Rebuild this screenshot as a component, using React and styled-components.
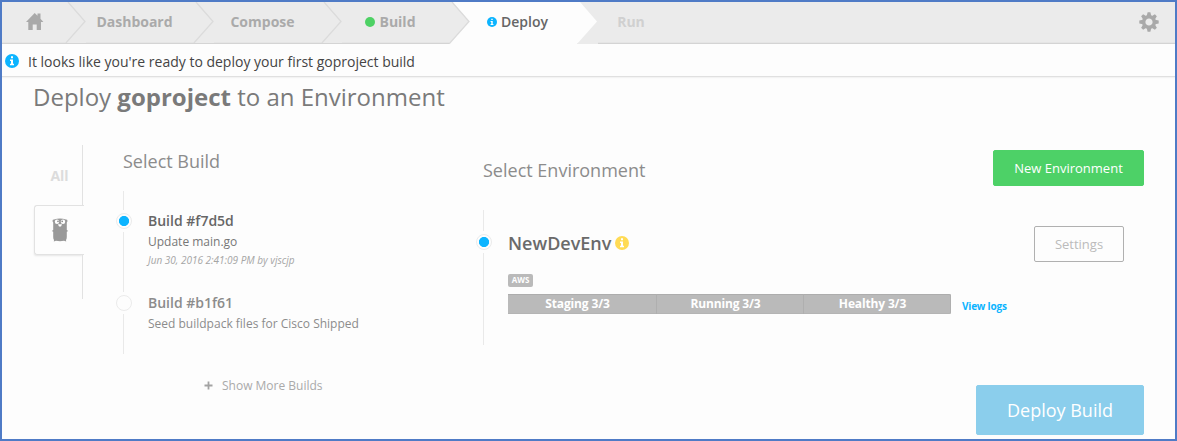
import React from "react";
import styled, { createGlobalStyle, css } from "styled-components";

const GlobalStyle = createGlobalStyle`
  * { box-sizing: border-box; }
  body { margin: 0; background: #fdfdfd; }
`;

const Frame = styled.div`
  width: 1177px;
  height: 441px;
  border: 2px solid #4f7bc6;
  background: #fdfdfd;
  overflow: hidden;
  font-family: "Open Sans", "Liberation Sans", sans-serif;
  color: #666;
  white-space: nowrap;
`;

const NavBar = styled.nav`
  display: flex;
  height: 42px;
  background: #ebebeb;
  box-shadow: inset 0 -1px 0 #d4d4d4, inset 0 -2px 0 #e5e5e5;
`;

const HomeLink = styled.a`
  width: 63px;
  padding: 11px 0 0 24px;
`;

const Step = styled.a`
  display: flex;
  width: ${(p) => p.$width || 128}px;
`;

const StepLabel = styled.span`
  flex: 1;
  display: flex;
  align-items: center;
  justify-content: center;
  gap: 4px;
  padding: 0 ${(p) => (p.$active ? 12 : 10)}px 3px 0;
  font-size: 14px;
  font-weight: ${(p) => (p.$active ? 600 : 700)};
  color: ${(p) => p.$color || "#aaa"};
  background: ${(p) => (p.$active ? "#fdfdfd" : "transparent")};
`;

const StatusDot = styled.i`
  width: 10px;
  height: 10px;
  border-radius: 50%;
  background: #4dd164;
`;

const SettingsLink = styled.a`
  margin-left: auto;
  padding: 10px 16px 0 0;
`;

const Notice = styled.div`
  display: flex;
  align-items: center;
  height: 33px;
  padding: 4px 0 0 3px;
  gap: 9px;
  border-bottom: 1px solid #e0e0e0;
  box-shadow: 0 1px 1px #f3f3f3;
  font-size: 14px;
  line-height: 20px;
  color: #444;
  background: #fdfdfd;

  svg {
    margin-bottom: 3px;
  }
`;

const PageTitle = styled.h1`
  margin: 0;
  padding-left: 31px;
  height: 42px;
  line-height: 40px;
  font-size: 24px;
  font-weight: 400;
  color: #7a7a7a;
`;

const Body = styled.main`
  display: flex;
  padding-left: 32px;
`;

const Tabs = styled.aside`
  width: 50px;
  height: 154px;
  margin-top: 26px;
`;

const Tab = styled.div`
  display: flex;
  align-items: center;
  justify-content: center;
  font-size: 14px;
  font-weight: 700;
  color: #dcdcdc;
  height: ${(p) => p.$height}px;
  ${(p) =>
    p.$selected
      ? css`
          width: 50px;
          border: 1px solid #e2e2e2;
          border-right: 0;
          border-radius: 3px 0 0 3px;
          box-shadow: -1px 2px 2px -1px #e6e6e6;
        `
      : css`
          width: 49px;
          padding-left: 3px;
          border-right: 1px solid #e2e2e2;
        `}
`;

const Builds = styled.section`
  width: 392px;
  padding: 31px 0 0 32px;
`;

const SectionTitle = styled.h2`
  margin: 0;
  padding-left: 7px;
  font-size: 18px;
  line-height: 22px;
  font-weight: 400;
  color: #8c8c8c;
`;

const BuildList = styled.div`
  margin-top: 19px;
`;

const TimelineItem = styled.div`
  display: flex;
  height: ${(p) => p.$height}px;
`;

const Rail = styled.div`
  display: flex;
  flex-direction: column;
  flex: none;
  width: 16px;
`;

const RailLine = styled.div`
  width: 1px;
  margin-left: 7px;
  background: #e9e9e9;
  ${(p) => (p.$height === undefined ? "flex: 1;" : `height: ${p.$height}px;`)}
`;

const Marker = styled.div`
  width: 16px;
  height: 16px;
  margin: 3px 0;
  border: 1px solid #ebebeb;
  border-radius: 50%;
  background: ${(p) =>
    p.$on ? "radial-gradient(circle, #0cb4ff 4.7px, #fdfdfd 5.4px)" : "#fdfdfd"};
`;

const BuildText = styled.div`
  padding: ${(p) => p.$top}px 0 0 16px;
  color: ${(p) => p.$color};
  font-size: 12px;
  line-height: 20px;
`;

const BuildName = styled.div`
  font-size: 14px;
  font-weight: 600;
  line-height: 22px;
  color: ${(p) => p.$color || "inherit"};
`;

const BuildDate = styled.div`
  font-size: 10px;
  line-height: 17px;
  font-style: italic;
  color: #a5a5a5;
`;

const ShowMore = styled.a`
  display: flex;
  align-items: center;
  gap: 9px;
  margin: 22px 0 0 88px;
  font-size: 12px;
  line-height: 20px;
  color: #aaa;

  svg {
    margin-bottom: 2px;
  }
`;

const Environments = styled.section`
  width: 668px;
  padding-top: 31px;
`;

const EnvHeader = styled.header`
  display: flex;
  justify-content: space-between;
  align-items: flex-start;
  margin-bottom: 24px;

  ${SectionTitle} {
    padding-top: 9px;
  }
`;

const Button = styled.button`
  font-family: inherit;
  width: ${(p) => p.$width}px;
  height: ${(p) => p.$height}px;
  padding: 0;
  border: 1px solid ${(p) => p.$border || p.$bg};
  border-radius: 2px;
  background: ${(p) => p.$bg};
  color: ${(p) => p.$color || "#fff"};
  font-size: ${(p) => p.$size || 13}px;
`;

const EnvDetails = styled.div`
  flex: 1;
  padding: 16px 20px 0 16px;
`;

const EnvTop = styled.div`
  display: flex;
  justify-content: space-between;
  align-items: flex-start;
  height: 48px;
`;

const EnvName = styled.div`
  display: flex;
  align-items: center;
  gap: 4px;
  height: 33px;
  font-size: 18px;
  font-weight: 600;
  color: #6a6a6a;
`;

const Badge = styled.div`
  width: 25px;
  height: 13px;
  border-radius: 2px;
  background: #bababa;
  color: #fff;
  font-size: 8px;
  line-height: 12px;
  font-weight: 700;
  text-align: center;
`;

const StatusRow = styled.div`
  display: flex;
  align-items: center;
  margin-top: 7px;
  gap: 11px;
`;

const StatusBar = styled.div`
  display: grid;
  grid-template-columns: 149px 147px 147px;
  height: 20px;
  border-radius: 0 2px 2px 0;
  overflow: hidden;
  background: #bababa;
  box-shadow: inset 0 1px 0 #adadad, inset 0 -1px 0 #b4b4b4;
`;

const StatusCell = styled.div`
  padding-right: 9px;
  border-right: 1px solid #afafaf;
  color: #fff;
  font-size: 12px;
  line-height: 19px;
  font-weight: 700;
  letter-spacing: -0.15px;
  text-align: center;
`;

const LogsLink = styled.a`
  padding-top: 3px;
  font-size: 10px;
  font-weight: 700;
  letter-spacing: -0.2px;
  color: #0cb4ff;
`;

const DeployRow = styled.div`
  display: flex;
  justify-content: flex-end;
  margin-top: 40px;
`;

function Chevron({ left = "#ebebeb", right = "#ebebeb", line = true }) {
  return (
    <svg width="21" height="42" viewBox="0 0 21 42">
      <path d="M3 0H21V42H0L20 19.5Z" fill={right} />
      <path d="M0 0H3L20 19.5L0 42Z" fill={left} />
      {line && <path d="M3 0L20 19.5L0 42" fill="none" stroke="#dbdbdb" strokeWidth="1.3" />}
      {right === left && <path d="M0 41.5H21" stroke="#d4d4d4" />}
    </svg>
  );
}

function InfoIcon({ size, color }) {
  return (
    <svg width={size} height={size} viewBox="0 0 14 14">
      <circle cx="7" cy="7" r="7" fill={color} />
      <path d="M6 2.3h2v2H6zM5 5.5h3v4.2h1v1.5H5V9.7h1V7H5z" fill="#fff" />
    </svg>
  );
}

function HomeIcon() {
  return (
    <svg width="18" height="18" viewBox="0 0 18 18" fill="#a9a9a9">
      <path d="M8.7 0L11.5 2.8V.6h3v5.2L17.4 9H15v8H10.7v-5.5H6.7V17H2.3V9H0Z" />
    </svg>
  );
}

function GearIcon() {
  return (
    <svg width="20" height="20" viewBox="-10 -10 20 20" fill="#a9a9a9">
      {[0, 45, 90, 135, 180, 225, 270, 315].map((a) => (
        <path key={a} transform={`rotate(${a})`} d="M-2.3 -6L-1.4 -9.7H1.4L2.3 -6Z" />
      ))}
      <circle r="5.3" fill="none" stroke="#a9a9a9" strokeWidth="3.4" />
    </svg>
  );
}

function GopherIcon() {
  return (
    <svg width="18" height="24" viewBox="0 0 18 24">
      <path d="M3 1.6Q9-.4 15 1.6Q16.8 1.6 16.4 3.4L15.8 4.6V12L17.2 13L15.8 13.8V19Q15.8 21 15 22L15.2 23.4L13 22.8Q9 23.6 5 22.8L2.8 23.4L3 22Q2.2 21 2.2 19V13.8L.8 13L2.2 12V4.6L1.6 3.4Q1.2 1.6 3 1.6Z" fill="#999" />
      <circle cx="6" cy="3.8" r="2.2" fill="#fff" />
      <circle cx="12" cy="3.8" r="2.2" fill="#fff" />
      <circle cx="7" cy="3.4" r=".8" fill="#888" />
      <circle cx="11.2" cy="3.4" r=".8" fill="#888" />
      <path d="M7 6.2H11L10 8.4H8Z" fill="#fff" />
    </svg>
  );
}

function PlusIcon() {
  return (
    <svg width="9" height="9" viewBox="0 0 9 9">
      <path d="M4.5 .5V8.5M.5 4.5H8.5" stroke="#a3a3a3" strokeWidth="1.8" />
    </svg>
  );
}

export default function App() {
  return (
    <Frame>
      <GlobalStyle />
      <NavBar>
        <HomeLink><HomeIcon /></HomeLink>
        <Step><Chevron /><StepLabel>Dashboard</StepLabel></Step>
        <Step><Chevron /><StepLabel>Compose</StepLabel></Step>
        <Step><Chevron /><StepLabel><StatusDot />Build</StepLabel></Step>
        <Step>
          <Chevron right="#fdfdfd" />
          <StepLabel $active $color="#666"><InfoIcon size={10} color="#0cb4ff" />Deploy</StepLabel>
        </Step>
        <Step $width={97}>
          <Chevron left="#fdfdfd" line={false} />
          <StepLabel $color="#d0d0d0">Run</StepLabel>
        </Step>
        <SettingsLink><GearIcon /></SettingsLink>
      </NavBar>
      <Notice>
        <InfoIcon size={14} color="#0cb4ff" />
        <span>It looks like you're ready to deploy your first goproject build</span>
      </Notice>
      <PageTitle>Deploy <b>goproject</b> to an Environment</PageTitle>
      <Body>
        <Tabs>
          <Tab $height={60}>All</Tab>
          <Tab $height={50} $selected><GopherIcon /></Tab>
          <Tab $height={44} />
        </Tabs>
        <Builds>
          <SectionTitle>Select Build</SectionTitle>
          <BuildList>
            <TimelineItem $height={101}>
              <Rail>
                <RailLine $height={19} />
                <Marker $on />
                <RailLine />
              </Rail>
              <BuildText $top={19} $color="#777">
                <BuildName $color="#666">Build #f7d5d</BuildName>
                <div>Update main.go</div>
                <BuildDate>Jun 30, 2016 2:41:09 PM by vjscjp</BuildDate>
              </BuildText>
            </TimelineItem>
            <TimelineItem $height={62}>
              <Rail>
                <Marker />
                <RailLine />
              </Rail>
              <BuildText $top={0} $color="#8c8c8c">
                <BuildName>Build #b1f61</BuildName>
                <div>Seed buildpack files for Cisco Shipped</div>
              </BuildText>
            </TimelineItem>
          </BuildList>
          <ShowMore><PlusIcon />Show More Builds</ShowMore>
        </Builds>
        <Environments>
          <EnvHeader>
            <SectionTitle>Select Environment</SectionTitle>
            <Button $width={151} $height={36} $bg="#4dd167">New Environment</Button>
          </EnvHeader>
          <TimelineItem $height={135}>
            <Rail>
              <RailLine $height={21} />
              <Marker $on />
              <RailLine />
            </Rail>
            <EnvDetails>
              <EnvTop>
                <EnvName>NewDevEnv<InfoIcon size={14} color="#ffdb55" /></EnvName>
                <Button $width={90} $height={36} $bg="#fdfdfd" $border="#b0b0b0" $color="#bbb">Settings</Button>
              </EnvTop>
              <Badge>AWS</Badge>
              <StatusRow>
                <StatusBar>
                  <StatusCell>Staging 3/3</StatusCell>
                  <StatusCell>Running 3/3</StatusCell>
                  <StatusCell>Healthy 3/3</StatusCell>
                </StatusBar>
                <LogsLink>View logs</LogsLink>
              </StatusRow>
            </EnvDetails>
          </TimelineItem>
          <DeployRow>
            <Button $width={168} $height={50} $bg="#8bceec" $size={18}>Deploy Build</Button>
          </DeployRow>
        </Environments>
      </Body>
    </Frame>
  );
}
